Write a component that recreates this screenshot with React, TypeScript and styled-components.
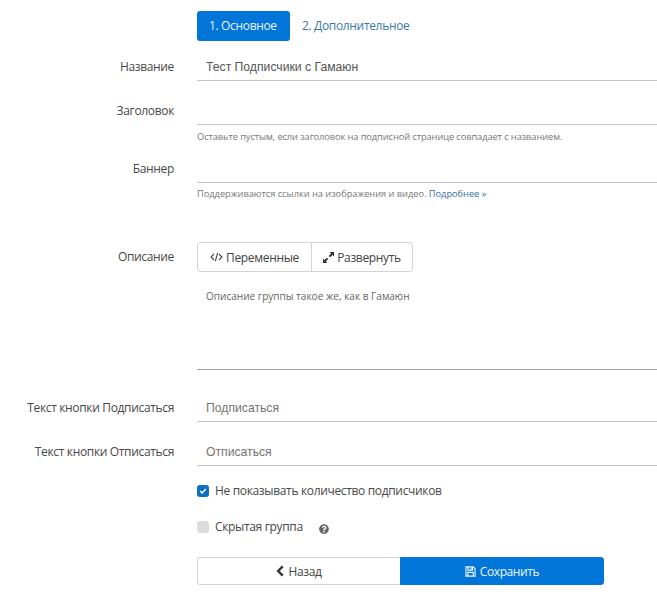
import React from 'react';
import styled, { createGlobalStyle } from 'styled-components';
import { FaQuestionCircle } from 'react-icons/fa';

const Global = createGlobalStyle`
  * { box-sizing: border-box; }
  body { margin: 0; background: #fff; overflow: hidden; }
`;

const Page = styled.form`
  width: 657px;
  height: 600px;
  padding-top: 11px;
  overflow: hidden;
  font-family: 'Open Sans', 'Noto Sans', sans-serif;
  font-size: 12px;
  letter-spacing: -0.34px;
  color: #484848;
`;

const Row = styled.div<{ $h: number }>`
  display: grid;
  grid-template-columns: 174px 1fr;
  column-gap: 23px;
  height: ${p => p.$h}px;
  align-items: start;
`;

const Label = styled.label<{ $top?: number }>`
  text-align: right;
  white-space: nowrap;
  line-height: 18px;
  padding-top: ${p => p.$top ?? 4}px;
`;

const Tabs = styled.nav`
  display: flex;
  grid-column: 2;
`;

const Tab = styled.a<{ $active?: boolean }>`
  height: 30px;
  line-height: 30px;
  width: ${p => (p.$active ? '93px' : 'auto')};
  padding: 0 12px;
  border-radius: 3px;
  white-space: nowrap;
  background: ${p => (p.$active ? '#0275d8' : 'transparent')};
  color: ${p => (p.$active ? '#e8f6ff' : '#3a79a6')};
`;

const Input = styled.input`
  display: block;
  width: 100%;
  height: 27px;
  padding: 0 9px 1px;
  border: 0;
  border-bottom: 1px solid #c4c4c4;
  border-radius: 0;
  outline: 0;
  background: transparent;
  font: 12.2px 'Liberation Sans', Arial, sans-serif;
  letter-spacing: 0;
  color: #555;
  &::placeholder { color: #747474; opacity: 1; }
`;

const Hint = styled.div<{ $ls: number; $lh: number }>`
  margin-top: 4px;
  font-size: 9.3px;
  line-height: ${p => p.$lh}px;
  white-space: nowrap;
  color: #777;
  letter-spacing: ${p => p.$ls}px;
  a { color: #2f6f9f; }
`;

const Group = styled.div`
  display: flex;
`;

const ToolButton = styled.button<{ $w: number }>`
  display: flex;
  align-items: center;
  justify-content: center;
  gap: 3px;
  width: ${p => p.$w}px;
  height: 30px;
  padding: 0;
  border: 1px solid #d4d4d4;
  border-radius: 3px 0 0 3px;
  background: #fff;
  color: #444;
  font: inherit;
  letter-spacing: inherit;
  white-space: nowrap;
  & + & { margin-left: -1px; border-radius: 0 3px 3px 0; }
`;

const Area = styled.textarea`
  display: block;
  width: 100%;
  height: 98px;
  padding: 17px 9px;
  border: 0;
  border-bottom: 1px solid #a4a4a4;
  outline: 0;
  resize: none;
  background: transparent;
  font: 10.05px/14px 'Open Sans', 'Noto Sans', sans-serif;
  letter-spacing: 0;
  color: #666;
`;

const CheckLine = styled.label`
  display: flex;
  align-items: center;
  height: 18px;
  line-height: 16px;
  white-space: nowrap;
`;

const Box = styled.span<{ $on?: boolean }>`
  display: flex;
  align-items: center;
  justify-content: center;
  width: 12px;
  height: 12px;
  margin-right: 6px;
  border-radius: 3px;
  background: ${p => (p.$on ? '#0b6fc2' : '#dcdcdc')};
`;

const Help = styled.span`
  display: flex;
  margin: 3px 0 0 16px;
  color: #666;
`;

const Actions = styled.div`
  display: flex;
  width: 407px;
`;

const Action = styled.button<{ $primary?: boolean }>`
  display: flex;
  align-items: center;
  justify-content: center;
  gap: 4px;
  width: ${p => (p.$primary ? 204 : 203)}px;
  height: 28px;
  padding: 0;
  border: 1px solid ${p => (p.$primary ? '#0275d8' : '#d4d4d4')};
  border-width: ${p => (p.$primary ? '1px' : '1px 0 1px 1px')};
  border-radius: ${p => (p.$primary ? '0 3px 3px 0' : '3px 0 0 3px')};
  background: ${p => (p.$primary ? '#0275d8' : '#fff')};
  color: ${p => (p.$primary ? '#eef8ff' : '#444')};
  font: inherit;
  letter-spacing: ${p => (p.$primary ? '-0.4px' : '-0.34px')};
`;

const CodeIcon = () => (
  <svg width="13" height="10" viewBox="0 0 13 10" fill="none" stroke="currentColor" strokeWidth="1.1">
    <path d="M4 2L1 5l3 3M9 2l3 3-3 3M7.6 .8L5.4 9.2" />
  </svg>
);

const ExpandIcon = () => (
  <svg width="11" height="11" viewBox="0 0 11 11" fill="#333">
    <path d="M6.6 0H11v4.4L9.5 2.9 7.1 5.3 5.7 3.9 8.1 1.5zM0 6.6l1.5 1.5 2.4-2.4 1.4 1.4-2.4 2.4L4.4 11H0z" />
  </svg>
);

const BackIcon = () => (
  <svg width="8" height="12" viewBox="0 0 8 12" fill="none" stroke="#333" strokeWidth="2.4">
    <path d="M6.7 1.4L2.2 6l4.5 4.6" />
  </svg>
);

const SaveIcon = () => (
  <svg width="11" height="11" viewBox="0 0 12 12" fill="none" stroke="currentColor" strokeWidth="1.2">
    <path d="M1 1h8l2 2v8H1zM3 11V7h6v4M3.2 1v3.5h5V1" />
    <path d="M6 1.6h1.3v2H6z" fill="currentColor" stroke="none" />
  </svg>
);

const CheckIcon = () => (
  <svg width="8" height="8" viewBox="0 0 8 8" fill="none" stroke="#fff" strokeWidth="1.5">
    <path d="M1.2 4l1.9 1.9L6.8 2.1" />
  </svg>
);

export default function App() {
  return (
    <>
      <Global />
      <Page>
        <Row $h={43}>
          <Tabs>
            <Tab $active>1. Основное</Tab>
            <Tab>2. Дополнительное</Tab>
          </Tabs>
        </Row>
        <Row $h={44}>
          <Label>Название</Label>
          <Input defaultValue="Тест Подписчики с Гамаюн" />
        </Row>
        <Row $h={58}>
          <Label>Заголовок</Label>
          <div>
            <Input />
            <Hint $ls={-0.1} $lh={15}>Оставьте пустым, если заголовок на подписной странице совпадает с названием.</Hint>
          </div>
        </Row>
        <Row $h={86}>
          <Label>Баннер</Label>
          <div>
            <Input />
            <Hint $ls={-0.04} $lh={14}>Поддерживаются ссылки на изображения и видео. <a>Подробнее »</a></Hint>
          </div>
        </Row>
        <Row $h={153}>
          <Label $top={6}>Описание</Label>
          <div>
            <Group>
              <ToolButton type="button" $w={115}><CodeIcon />Переменные</ToolButton>
              <ToolButton type="button" $w={102}><ExpandIcon />Развернуть</ToolButton>
            </Group>
            <Area defaultValue="Описание группы такое же, как в Гамаюн" />
          </div>
        </Row>
        <Row $h={44}>
          <Label>Текст кнопки Подписаться</Label>
          <Input placeholder="Подписаться" />
        </Row>
        <Row $h={43}>
          <Label>Текст кнопки Отписаться</Label>
          <Input placeholder="Отписаться" />
        </Row>
        <Row $h={36}>
          <span />
          <CheckLine><Box $on><CheckIcon /></Box>Не показывать количество подписчиков</CheckLine>
        </Row>
        <Row $h={39}>
          <span />
          <CheckLine><Box />Скрытая группа<Help><FaQuestionCircle size={10} /></Help></CheckLine>
        </Row>
        <Row $h={28}>
          <span />
          <Actions>
            <Action type="button"><BackIcon />Назад</Action>
            <Action type="button" $primary><SaveIcon />Сохранить</Action>
          </Actions>
        </Row>
      </Page>
    </>
  );
}
